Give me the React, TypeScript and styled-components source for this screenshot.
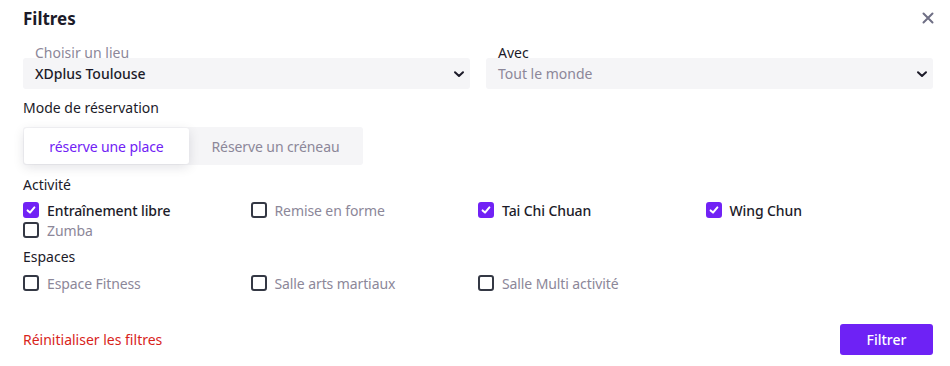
import React, { useState } from "react";
import styled, { createGlobalStyle } from "styled-components";

const GlobalStyle = createGlobalStyle`
  body {
    margin: 0;
    background: #ffffff;
    font-family: "Noto Sans", "Open Sans", sans-serif;
    color: #1c1b29;
  }
`;

const Modal = styled.div`
  width: 950px;
  height: 366px;
  box-sizing: border-box;
  padding: 0 17px 0 23px;
  display: flex;
  flex-direction: column;
`;

const Header = styled.div`
  height: 36px;
  display: flex;
  align-items: center;
  justify-content: space-between;
`;

const Title = styled.h2`
  margin: 0;
  font-size: 17px;
  font-weight: 700;
  color: #1c1b29;
`;

const CloseButton = styled.button`
  border: none;
  background: none;
  padding: 0;
  margin-right: -1px;
  display: flex;
  cursor: pointer;
`;

const SelectRow = styled.div`
  display: grid;
  grid-template-columns: 1fr 1fr;
  column-gap: 16px;
  margin-top: 8px;
`;

const Field = styled.div`
  position: relative;
  padding-top: 14px;
`;

const FloatingLabel = styled.span<{ $muted?: boolean }>`
  position: absolute;
  top: 1px;
  left: 12px;
  font-size: 14px;
  line-height: 16px;
  color: ${({ $muted }) => ($muted ? "#8c8799" : "#1c1b29")};
`;

const SelectBox = styled.div`
  height: 31px;
  background: #f5f5f7;
  border-radius: 3px;
  display: flex;
  align-items: center;
  justify-content: space-between;
  padding: 0 3px 0 12px;
`;

const SelectValue = styled.span<{ $placeholder?: boolean }>`
  font-size: 14px;
  font-weight: ${({ $placeholder }) => ($placeholder ? 400 : 500)};
  color: ${({ $placeholder }) => ($placeholder ? "#8c8799" : "#1c1b29")};
`;

const SectionLabel = styled.div<{ $gap: number }>`
  margin-top: ${({ $gap }) => $gap}px;
  font-size: 14px;
  line-height: 20px;
  color: #1c1b29;
`;

const Segmented = styled.div`
  margin-top: 9px;
  width: 340px;
  height: 38px;
  box-sizing: border-box;
  padding: 1px;
  background: #f5f5f7;
  border-radius: 3px;
  display: flex;
`;

const SegmentButton = styled.button<{ $active?: boolean }>`
  border: none;
  border-radius: 3px;
  font-family: inherit;
  font-size: 14px;
  letter-spacing: -0.1px;
  cursor: pointer;
  width: ${({ $active }) => ($active ? "165px" : "173px")};
  background: ${({ $active }) => ($active ? "#ffffff" : "transparent")};
  color: ${({ $active }) => ($active ? "#7122f5" : "#8c8799")};
  box-shadow: ${({ $active }) =>
    $active ? "0 3px 12px rgba(20, 20, 40, 0.12)" : "none"};
`;

const CheckGrid = styled.div<{ $gap: number }>`
  margin-top: ${({ $gap }) => $gap}px;
  display: grid;
  grid-template-columns: repeat(4, 1fr);
`;

const CheckItem = styled.label`
  display: flex;
  align-items: center;
  gap: 8px;
  height: 20px;
  cursor: pointer;
`;

const Box = styled.span<{ $checked?: boolean }>`
  width: 16px;
  height: 16px;
  box-sizing: border-box;
  border-radius: 3px;
  border: 2px solid ${({ $checked }) => ($checked ? "#7122f5" : "#343844")};
  background: ${({ $checked }) => ($checked ? "#7122f5" : "#ffffff")};
  display: flex;
  align-items: center;
  justify-content: center;
`;

const CheckText = styled.span<{ $checked?: boolean }>`
  font-size: 14px;
  letter-spacing: -0.1px;
  font-weight: ${({ $checked }) => ($checked ? 500 : 400)};
  color: ${({ $checked }) => ($checked ? "#1c1b29" : "#8c8799")};
`;

const Footer = styled.div`
  margin-top: 31px;
  display: flex;
  align-items: center;
  justify-content: space-between;
`;

const ResetLink = styled.button`
  border: none;
  background: none;
  padding: 0;
  font-family: inherit;
  font-size: 14px;
  color: #d8241b;
  cursor: pointer;
`;

const SubmitButton = styled.button`
  width: 93px;
  height: 31px;
  border: none;
  border-radius: 3px;
  background: #6e22f5;
  color: #ffffff;
  font-family: inherit;
  font-size: 14px;
  font-weight: 500;
  cursor: pointer;
`;

const Chevron = () => (
  <svg width="16" height="16" viewBox="0 0 16 16">
    <path d="M4 6.2 L8 10 L12 6.2" fill="none" stroke="#1c1b29" strokeWidth="2" strokeLinecap="round" strokeLinejoin="round" />
  </svg>
);

const CloseIcon = () => (
  <svg width="12" height="12" viewBox="0 0 12 12">
    <path d="M1.5 1.5 L10.5 10.5 M10.5 1.5 L1.5 10.5" stroke="#6f6f85" strokeWidth="2" strokeLinecap="round" />
  </svg>
);

const Tick = () => (
  <svg width="10" height="10" viewBox="0 0 10 10">
    <path d="M1.6 5.4 L4 7.6 L8.4 2.4" fill="none" stroke="#ffffff" strokeWidth="2" strokeLinecap="round" strokeLinejoin="round" />
  </svg>
);

interface Option {
  label: string;
  checked: boolean;
}

const activities: Option[] = [
  { label: "Entraînement libre", checked: true },
  { label: "Remise en forme", checked: false },
  { label: "Tai Chi Chuan", checked: true },
  { label: "Wing Chun", checked: true },
  { label: "Zumba", checked: false },
];

const spaces: Option[] = [
  { label: "Espace Fitness", checked: false },
  { label: "Salle arts martiaux", checked: false },
  { label: "Salle Multi activité", checked: false },
];

const CheckList: React.FC<{ items: Option[]; gap: number }> = ({ items, gap }) => (
  <CheckGrid $gap={gap}>
    {items.map((item) => (
      <CheckItem key={item.label}>
        <Box $checked={item.checked}>{item.checked && <Tick />}</Box>
        <CheckText $checked={item.checked}>{item.label}</CheckText>
      </CheckItem>
    ))}
  </CheckGrid>
);

export default function App() {
  const [mode, setMode] = useState<"place" | "creneau">("place");

  return (
    <>
      <GlobalStyle />
      <Modal>
        <Header>
          <Title>Filtres</Title>
          <CloseButton aria-label="Fermer">
            <CloseIcon />
          </CloseButton>
        </Header>

        <SelectRow>
          <Field>
            <FloatingLabel $muted>Choisir un lieu</FloatingLabel>
            <SelectBox>
              <SelectValue>XDplus Toulouse</SelectValue>
              <Chevron />
            </SelectBox>
          </Field>
          <Field>
            <FloatingLabel>Avec</FloatingLabel>
            <SelectBox>
              <SelectValue $placeholder>Tout le monde</SelectValue>
              <Chevron />
            </SelectBox>
          </Field>
        </SelectRow>

        <SectionLabel $gap={9}>Mode de réservation</SectionLabel>
        <Segmented>
          <SegmentButton $active={mode === "place"} onClick={() => setMode("place")}>
            réserve une place
          </SegmentButton>
          <SegmentButton $active={mode === "creneau"} onClick={() => setMode("creneau")}>
            Réserve un créneau
          </SegmentButton>
        </Segmented>

        <SectionLabel $gap={10}>Activité</SectionLabel>
        <CheckList items={activities} gap={5} />

        <SectionLabel $gap={7}>Espaces</SectionLabel>
        <CheckList items={spaces} gap={6} />

        <Footer>
          <ResetLink>Réinitialiser les filtres</ResetLink>
          <SubmitButton>Filtrer</SubmitButton>
        </Footer>
      </Modal>
    </>
  );
}
